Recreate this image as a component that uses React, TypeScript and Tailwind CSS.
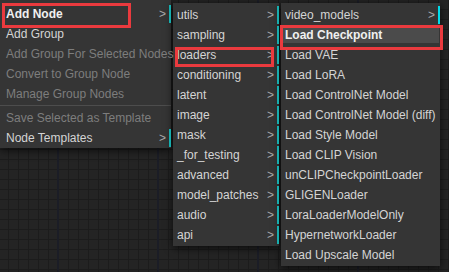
import React from 'react';

type Entry = {
  label: string;
  sub?: boolean;
  disabled?: boolean;
  bold?: boolean;
  active?: boolean;
  bright?: boolean;
  mark?: string; // red annotation box around the row
};

const mainMenu: (Entry | 'sep')[] = [
  { label: 'Add Node', sub: true, bold: true, mark: 'left-[2px] -top-[1px] w-[129px] h-[25px]' },
  { label: 'Add Group' },
  { label: 'Add Group For Selected Nodes', disabled: true },
  { label: 'Convert to Group Node', disabled: true },
  { label: 'Manage Group Nodes', disabled: true },
  'sep',
  { label: 'Save Selected as Template', disabled: true },
  { label: 'Node Templates', sub: true },
];

const categories: Entry[] = [
  'utils', 'sampling', 'loaders', 'conditioning', 'latent', 'image', 'mask',
  '_for_testing', 'advanced', 'model_patches', 'audio', 'api',
].map((label) => ({
  label,
  sub: true,
  mark: label === 'loaders' ? 'left-[2px] top-[2px] w-[99px] h-[20px]' : undefined,
}));

const loaders: Entry[] = [
  { label: 'video_models', sub: true, bright: true },
  { label: 'Load Checkpoint', bold: true, active: true, mark: '-left-[1px] top-0 w-[163px] h-[25px]' },
  { label: 'Load VAE' },
  { label: 'Load LoRA' },
  { label: 'Load ControlNet Model' },
  { label: 'Load ControlNet Model (diff)' },
  { label: 'Load Style Model' },
  { label: 'Load CLIP Vision' },
  { label: 'unCLIPCheckpointLoader' },
  { label: 'GLIGENLoader' },
  { label: 'LoraLoaderModelOnly' },
  { label: 'HypernetworkLoader' },
  { label: 'Load Upscale Model' },
];

function MenuRow({ entry, padLeft }: { entry: Entry; padLeft: string }) {
  const color = entry.disabled
    ? 'text-[#7d7d7d]'
    : entry.bold
      ? 'text-[#f0f0f0]'
      : 'text-[#d4d4d4]';
  return (
    <div className={`relative flex items-center h-[20px] ${padLeft}`}>
      <div
        className={`flex items-center flex-1 self-stretch ${entry.active ? 'bg-[#4b4b4b] my-[2px] mr-[1px] -ml-[2px] pl-[2px]' : ''}`}
      >
        <span className={`whitespace-nowrap ${color} ${entry.bold ? 'font-bold' : ''}`}>{entry.label}</span>
        {entry.sub && <span className="ml-auto mr-[3px] text-[#a8a8a8]">&gt;</span>}
      </div>
      {entry.sub && (
        <div className={`w-[2px] self-stretch my-[1px] ${entry.bright ? 'bg-[#00dceb]' : 'bg-[#17aeae]'}`} />
      )}
      {entry.mark && (
        <div className={`absolute ${entry.mark} border-[3px] border-[#ea3a3e] pointer-events-none`} />
      )}
    </div>
  );
}

function Menu({ items, className, padLeft }: { items: (Entry | 'sep')[]; className: string; padLeft: string }) {
  return (
    <div className={`flex flex-col bg-[#353535] shadow-[0_2px_8px_rgba(0,0,0,0.7)] ${className}`}>
      {items.map((e, i) =>
        e === 'sep' ? (
          <div key={i} className="h-[4px] pt-[1px]">
            <div className="h-px bg-[#4d4d4d]" />
          </div>
        ) : (
          <MenuRow key={i} entry={e} padLeft={padLeft} />
        ),
      )}
    </div>
  );
}

export default function App() {
  return (
    <div
      className="w-[449px] h-[272px] overflow-hidden bg-[#242424] bg-[linear-gradient(to_right,#1b1d26_2px,transparent_2px),linear-gradient(to_right,#1c1c1c_1px,transparent_1px),linear-gradient(to_bottom,#1c1c1c_1px,transparent_1px)] bg-[size:100px_100%,10px_10px,10px_10px] bg-[position:57px_0,8px_9px,8px_9px] text-[12px] leading-none"
      style={{ fontFamily: '"Liberation Sans", Arial, sans-serif' }}
    >
      <div className="flex items-start gap-[2px]">
        <Menu items={mainMenu} className="w-[171px] pt-[4px]" padLeft="pl-[6px]" />
        <Menu items={categories} className="w-[106px] mt-[3px] pt-[2px] pb-[1px]" padLeft="pl-[4px]" />
        <Menu items={loaders} className="w-[159px] mt-[3px] pt-[2px] pb-[1px]" padLeft="pl-[4px]" />
      </div>
    </div>
  );
}
